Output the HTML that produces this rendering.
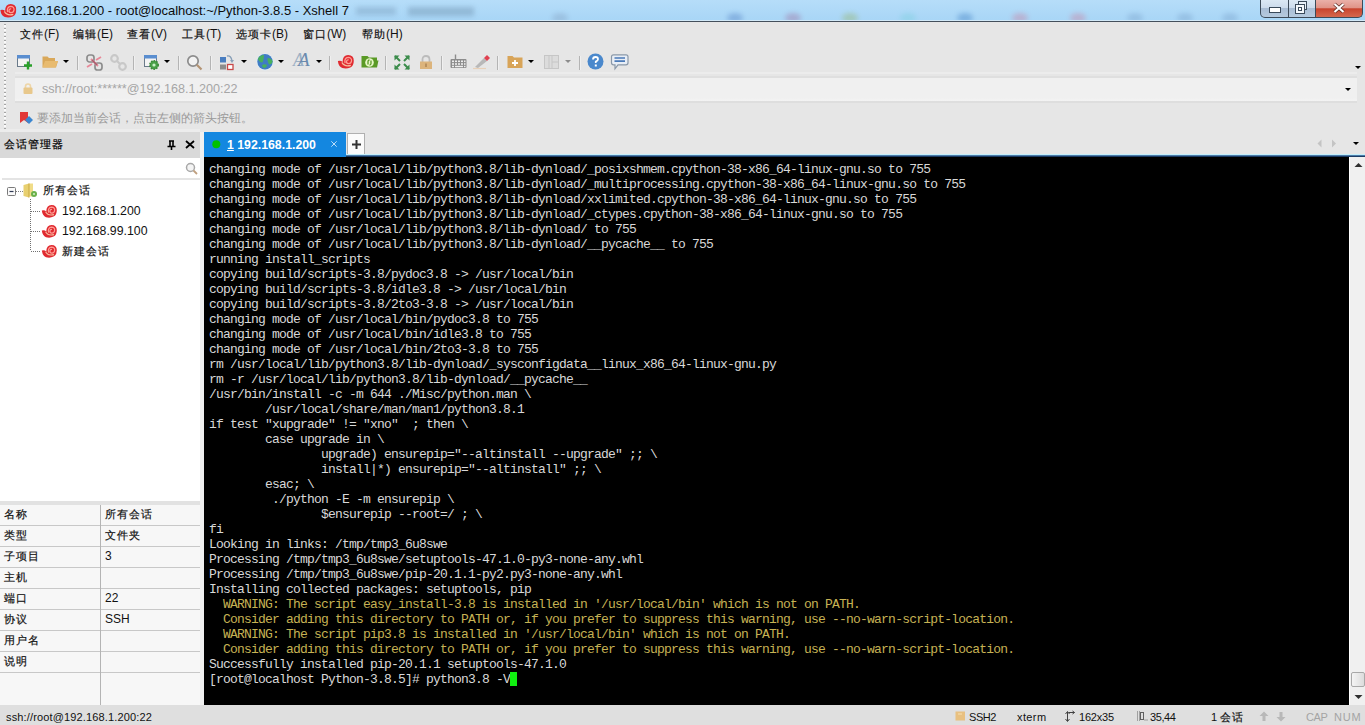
<!DOCTYPE html>
<html><head><meta charset="utf-8">
<style>
*{margin:0;padding:0;box-sizing:border-box}
html,body{width:1365px;height:725px;overflow:hidden;background:#e6e6e6;font-family:"Liberation Sans",sans-serif;font-size:12px;color:#000;position:relative}
.abs{position:absolute}
svg{position:absolute;overflow:visible}
#title{left:0;top:0;width:1365px;height:22px;background:linear-gradient(#b6ddf9,#a7d5f6);overflow:hidden}
#title .line{left:0;top:21px;width:1365px;height:1px;background:#44505c}
#title .line2{left:0;top:20px;width:1365px;height:1px;background:#d2e9f8}
#title .t{left:21px;top:3px;font-size:13px;color:#0c0c0c;white-space:nowrap}
.cap{top:0;height:18px;border:1px solid #3c4a58;border-top:none}
#menubar{left:0;top:22px;width:1365px;height:24px}
.mi{position:absolute;top:5px;font-size:12px;white-space:nowrap;color:#111}
.c{-webkit-text-stroke:0.2px currentColor;font-style:normal;font-size:11px;letter-spacing:1px}
#grip{left:4px;top:24px;width:2px;height:105px;background:repeating-linear-gradient(#a4a4a4 0 1.5px,#fafafa 1.5px 3px,#e6e6e6 3px 4px)}
.sep{position:absolute;top:56px;width:2px;height:14px;background:#b4b4b4;border-right:1px solid #f0f0f0}
.arr{position:absolute;width:0;height:0;border-left:3px solid transparent;border-right:3px solid transparent;border-top:3px solid #000}
#addr{left:15px;top:78px;width:1342px;height:23px;background:linear-gradient(#f0f0f0 0,#f0f0f0 85%,#f3f3f3 100%)}
#addr .t{left:27px;top:4px;color:#a6a6a6;font-size:12.6px;white-space:nowrap}
#hint .t{left:37px;top:110px;color:#9a9a9a;font-size:12px;white-space:nowrap}
#left{left:0;top:158px;width:200px;height:547px;background:#fff}
#lgap{left:200px;top:132px;width:4px;height:573px;background:#f0f0f0}
#lhead{left:0;top:132px;width:200px;height:26px;background:#d9d9d9}
#lhead .t{left:4px;top:5px;font-size:12px}
#search{left:2px;top:158px;width:198px;height:22px;background:#fff;border-bottom:2px solid #e4e4e4}
.tree{position:absolute;font-size:12.3px;white-space:nowrap;color:#111}
#split{left:0;top:501px;width:200px;height:4px;background:#e2e2e2}
#grid{left:0;top:505px;width:200px;height:200px;background:#f7f7f7}
.row{position:absolute;left:0;width:200px;height:21px;border-bottom:1px solid #c8c8c8}
.row span{position:absolute;top:2px;font-size:12px;white-space:nowrap;color:#111}
#vdiv{left:100px;top:505px;width:1px;height:200px;background:#b4b4b4}
#tabstrip{left:204px;top:132px;width:1161px;height:25px}
#tab{left:204px;top:132px;width:142px;height:25px;background:#1487e0}
#term{left:204px;top:157px;width:1145px;height:548px;background:#000;overflow:hidden}
#term pre{position:absolute;left:5px;top:5px;font-family:"Liberation Mono",monospace;font-size:13px;letter-spacing:-0.8px;line-height:15px;color:#d8d8d8}
#term .w{color:#c6b254}
.cur{display:inline-block;width:7px;height:14px;background:#10f010;vertical-align:-3px}
#sb{left:1349px;top:157px;width:16px;height:548px;background:#f0f0f0;border-left:1px solid #fff}
#status{left:0;top:705px;width:1365px;height:20px;background:#dfdfdf}
.st{position:absolute;top:711px;font-size:11px;white-space:nowrap;color:#111}
</style></head><body>
<svg width="0" height="0" style="position:absolute">
<defs>
<symbol id="xs" viewBox="0 0 16 14">
<path d="M0.8,6.6 Q3.5,5.8 5.3,7.5 Q5.2,1.2 10.5,0.9 Q15.8,1 15.8,6.2 Q15.8,11 12.5,12.6 Q9,14.3 5,13.2 Q1.5,12 0.8,6.6Z" fill="#e02a30"/>
<path d="M4.6,7.8 Q7,12.3 13,10.6" stroke="#f4c0a0" stroke-width="1.1" fill="none"/>
<path d="M7.6,8.6 Q6.5,3.6 10.6,3.2 Q13.8,3.3 13.7,6.3 Q13.4,9.2 10.7,9.1 Q8.7,8.9 8.9,6.8 Q9.2,5.2 11,5.5" stroke="#ff9c94" stroke-width="1.2" fill="none"/>
</symbol>
</defs>
</svg>

<div id="title" class="abs">
<div class="abs" style="left:552px;top:13px;width:16px;height:10px;border-radius:50%;background:#8aa8c8;opacity:0.45;filter:blur(2.5px)"></div><div class="abs" style="left:727px;top:13px;width:16px;height:10px;border-radius:50%;background:#5a88c8;opacity:0.45;filter:blur(2.5px)"></div><div class="abs" style="left:785px;top:13px;width:16px;height:10px;border-radius:50%;background:#a07aa8;opacity:0.45;filter:blur(2.5px)"></div><div class="abs" style="left:842px;top:13px;width:16px;height:10px;border-radius:50%;background:#98b878;opacity:0.45;filter:blur(2.5px)"></div><div class="abs" style="left:900px;top:13px;width:16px;height:10px;border-radius:50%;background:#80d0e0;opacity:0.45;filter:blur(2.5px)"></div><div class="abs" style="left:957px;top:13px;width:16px;height:10px;border-radius:50%;background:#4a88c8;opacity:0.45;filter:blur(2.5px)"></div><div class="abs" style="left:1012px;top:13px;width:16px;height:10px;border-radius:50%;background:#c888a8;opacity:0.45;filter:blur(2.5px)"></div><div class="abs" style="left:1070px;top:13px;width:16px;height:10px;border-radius:50%;background:#c888a8;opacity:0.45;filter:blur(2.5px)"></div><div class="abs" style="left:1127px;top:13px;width:16px;height:10px;border-radius:50%;background:#80a8d0;opacity:0.45;filter:blur(2.5px)"></div><div class="abs" style="left:1177px;top:13px;width:16px;height:10px;border-radius:50%;background:#80a8d0;opacity:0.45;filter:blur(2.5px)"></div><div class="abs" style="left:1222px;top:13px;width:16px;height:10px;border-radius:50%;background:#80a8d0;opacity:0.45;filter:blur(2.5px)"></div><div class="line2 abs"></div><div class="line abs"></div>
<svg style="left:0;top:3px" width="17" height="16"><use href="#xs" width="17" height="15" x="-0.5" y="0"/></svg>
<div class="t abs">192.168.1.200 - root@localhost:~/Python-3.8.5 - Xshell 7</div>
<div class="abs" style="left:356px;top:7px;width:40px;height:8px;background:rgba(70,100,130,0.22);filter:blur(2.5px)"></div><div class="abs" style="left:408px;top:7px;width:66px;height:9px;background:rgba(60,90,120,0.25);filter:blur(2.5px)"></div>
<div class="cap abs" style="left:1260px;width:29px;border-radius:0 0 0 5px;background:linear-gradient(#dbe8f4 0,#cddcec 45%,#a9bdd4 50%,#b6cade 100%)"></div>
<div class="cap abs" style="left:1288px;width:28px;background:linear-gradient(#dbe8f4 0,#cddcec 45%,#a9bdd4 50%,#b6cade 100%)"></div>
<div class="cap abs" style="left:1315px;width:48px;border-radius:0 0 5px 0;background:linear-gradient(#eab0a8 0,#e09488 45%,#c8442e 52%,#d4684e 100%)"></div>
<svg style="left:1269px;top:7px" width="12" height="6"><rect x="0.5" y="0.5" width="11" height="5" fill="#fff" stroke="#3a4a5a"/></svg>
<svg style="left:1294px;top:1px" width="14" height="14"><rect x="4.5" y="0.5" width="8" height="8" fill="#e8f0f8" stroke="#3a4a5a"/><rect x="1.5" y="3.5" width="9" height="9" fill="#f4f8fc" stroke="#3a4a5a"/><rect x="4" y="6" width="4" height="4" fill="#3a4a5a"/><rect x="5" y="7" width="2" height="2" fill="#fff"/></svg>
<svg style="left:1333px;top:3px" width="12" height="10"><path d="M1.5,1 L10.5,9 M10.5,1 L1.5,9" stroke="#5a2a22" stroke-width="3.6"/><path d="M1.5,1 L10.5,9 M10.5,1 L1.5,9" stroke="#fff" stroke-width="2.2"/></svg>
</div>

<div id="grip" class="abs"></div>
<div id="menubar" class="abs">
<span class="mi" style="left:20px"><i class="c">文件</i>(F)</span>
<span class="mi" style="left:73px"><i class="c">编辑</i>(E)</span>
<span class="mi" style="left:127px"><i class="c">查看</i>(V)</span>
<span class="mi" style="left:182px"><i class="c">工具</i>(T)</span>
<span class="mi" style="left:236px"><i class="c">选项卡</i>(B)</span>
<span class="mi" style="left:303px"><i class="c">窗口</i>(W)</span>
<span class="mi" style="left:362px"><i class="c">帮助</i>(H)</span>
</div>

<!-- toolbar -->
<div id="toolbar">
<svg style="left:16px;top:55px" width="16" height="16"><rect x="1.5" y="0.5" width="12" height="11" fill="#f4f4f4" stroke="#6a7a8a"/><rect x="1" y="0" width="13" height="3.5" fill="#5a8ed0"/><path d="M12,6.5 v8 M8,10.5 h8" stroke="#2aa02a" stroke-width="2.4"/></svg>
<svg style="left:42px;top:55px" width="17" height="13"><path d="M0.5,1.5 h5 l1.5,1.5 h6 v3 h3 l-2,6.5 h-13.5z" fill="#d9a85a"/><path d="M3,6 h13 l-2.5,6.5 h-13z" fill="#e8bb70"/></svg>
<div class="arr" style="left:63px;top:60px"></div>
<div class="sep" style="left:77px"></div>
<svg style="left:86px;top:54px" width="17" height="17"><rect x="1" y="1" width="7" height="7" rx="2.5" fill="none" stroke="#8c8c8c" stroke-width="1.7"/><rect x="9" y="9" width="7" height="7" rx="2.5" fill="none" stroke="#8c8c8c" stroke-width="1.7"/><path d="M1,13 L6,10 M10,6 L15,3 M5,5 L12,12" stroke="#e88898" stroke-width="1.8"/><path d="M6,6 L11,11" stroke="#a86070" stroke-width="1.6"/></svg>
<svg style="left:110px;top:54px" width="17" height="17"><circle cx="4.5" cy="4.5" r="3.3" fill="none" stroke="#c8c8c8" stroke-width="2.2"/><circle cx="12.5" cy="12.5" r="3.3" fill="none" stroke="#c8c8c8" stroke-width="2.2"/><path d="M7,7 L10,10" stroke="#c8c8c8" stroke-width="2.2"/></svg>
<div class="sep" style="left:133px"></div>
<svg style="left:143px;top:55px" width="17" height="17"><rect x="1.5" y="0.5" width="12" height="11" fill="#f4f4f4" stroke="#6a7a8a"/><rect x="1" y="0" width="13" height="3.5" fill="#5a8ed0"/><circle cx="11" cy="10" r="4.2" fill="#4aa04a" stroke="#3a8a3a" stroke-width="1.6" stroke-dasharray="1.6 1.1"/><circle cx="11" cy="10" r="1.6" fill="#c8f0c8"/></svg>
<div class="arr" style="left:164px;top:60px"></div>
<div class="sep" style="left:178px"></div>
<svg style="left:186px;top:54px" width="17" height="17"><circle cx="7" cy="7" r="5.2" fill="#f2f2f2" stroke="#8c8c8c" stroke-width="1.7"/><path d="M10.8,10.8 L15.5,15.5" stroke="#b49474" stroke-width="2.2"/></svg>
<div class="sep" style="left:210px"></div>
<svg style="left:219px;top:54px" width="16" height="17"><rect x="1" y="3" width="6" height="5.5" fill="#4a7ec0"/><rect x="1" y="10.5" width="6" height="5" fill="#8c8c8c"/><rect x="8.5" y="10.5" width="5.5" height="5" fill="#fff" stroke="#c84848" stroke-width="1.3"/><path d="M8,2 Q12,1 13,7" fill="none" stroke="#8aa0b8" stroke-width="1.4"/><path d="M11,6 L13,9 L15,6z" fill="#8aa0b8"/></svg>
<div class="arr" style="left:241px;top:60px"></div>
<svg style="left:257px;top:53px" width="17" height="17"><circle cx="8" cy="8.8" r="8.6" fill="#dff0fa" opacity="0.7"/><circle cx="8" cy="8.8" r="7.7" fill="#3f7cc4"/><path d="M1.5,4.5 Q4,1.5 7,2 Q7,6 5.5,9.5 Q2,9 1,6.5z M10.5,5 Q14.5,5 15.6,8.5 Q15,11.5 12,11.5 Q10,8.5 10.5,5z M5,12 Q8,10.5 10,12 Q9.5,15 6.5,15 Q5,13.5 5,12z" fill="#48b05e"/></svg>
<div class="arr" style="left:278px;top:60px"></div>
<span class="abs" style="left:293px;top:50px;font-family:'Liberation Serif',serif;font-style:italic;font-size:18px;color:#9cb0c4;line-height:20px">A</span><span class="abs" style="left:298px;top:50px;font-family:'Liberation Serif',serif;font-style:italic;font-size:19px;color:#6a8aae;line-height:20px">A</span>
<div class="arr" style="left:316px;top:60px"></div>
<div class="sep" style="left:329px"></div>
<svg style="left:337px;top:54px" width="17" height="15"><use href="#xs" width="17" height="15"/></svg>
<svg style="left:361px;top:55px" width="18" height="14"><path d="M0.5,1 h6 l1.5,1.5 h8 v3 h1.5 l-1.5,7 h-15.5z" fill="#5a9a26"/><circle cx="8.5" cy="7.5" r="4.3" fill="#e8f8c8"/><path d="M7,9.5 v-3 q0,-1.5 1.5,-1.5 M10,5.5 v3 q0,1.5 -1.5,1.5" stroke="#5a9a26" stroke-width="1.3" fill="none"/></svg>
<div class="sep" style="left:385px"></div>
<svg style="left:394px;top:55px" width="16" height="15"><path d="M1,1 L6,6 M15,1 L10,6 M1,14 L6,9 M15,14 L10,9" stroke="#3c8c4c" stroke-width="2"/><path d="M0.5,0.5 h5 l-5,5z M15.5,0.5 h-5 l5,5z M0.5,14.5 h5 l-5,-5z M15.5,14.5 h-5 l5,-5z" fill="#3c8c4c"/></svg>
<svg style="left:419px;top:55px" width="14" height="15"><path d="M3.5,7 V4.5 Q3.5,1 7,1 Q10.5,1 10.5,4.5 V7" fill="none" stroke="#bcbcbc" stroke-width="1.8"/><rect x="1" y="6.5" width="12" height="7.5" fill="#dcb47c"/><rect x="6.2" y="8.5" width="1.6" height="3.5" fill="#b08858"/></svg>
<div class="sep" style="left:441px"></div>
<svg style="left:450px;top:54px" width="17" height="15"><path d="M5.5,0.5 v5" stroke="#8c8c8c" stroke-width="1.4"/><rect x="0.5" y="5" width="16" height="9" rx="1" fill="#8c8c8c"/><g fill="#eeeeee"><rect x="2" y="6.5" width="2" height="1.6"/><rect x="5" y="6.5" width="2" height="1.6"/><rect x="8" y="6.5" width="2" height="1.6"/><rect x="11" y="6.5" width="2" height="1.6"/><rect x="2" y="9.2" width="2" height="1.6"/><rect x="5" y="9.2" width="2" height="1.6"/><rect x="8" y="9.2" width="2" height="1.6"/><rect x="11" y="9.2" width="2" height="1.6"/><rect x="14" y="9.2" width="1.5" height="1.6"/><rect x="2" y="11.8" width="2" height="1.4"/><rect x="5" y="11.8" width="8" height="1.4"/><rect x="14" y="11.8" width="1.5" height="1.4"/><rect x="14" y="6.5" width="1.5" height="1.6"/></g></svg>
<svg style="left:471px;top:54px" width="20" height="16"><path d="M2,14.5 h13" stroke="#e8d0b8" stroke-width="1.2"/><path d="M4,13 L13,4 L16,7 L7,14z" fill="#b8b8b8"/><path d="M13,4 L16,1 L19,4 L16,7z" fill="#e04050"/></svg>
<div class="sep" style="left:497px"></div>
<svg style="left:507px;top:55px" width="16" height="14"><path d="M0.5,1 h5 l1.5,1.5 h8.5 v10.5 h-15z" fill="#d8a458"/><path d="M8,5 v6 M5,8 h6" stroke="#fff" stroke-width="1.8"/></svg>
<div class="arr" style="left:528px;top:60px"></div>
<svg style="left:544px;top:55px" width="16" height="14"><rect x="0.5" y="0.5" width="14" height="13" fill="#dcdcdc" stroke="#c6c6c6"/><path d="M5,1 v12 M8,1 v12 M8,7 h6" stroke="#c6c6c6"/></svg>
<div class="arr" style="left:565px;top:60px;border-top-color:#8c8c8c"></div>
<div class="sep" style="left:579px"></div>
<svg style="left:587px;top:53px" width="17" height="17"><circle cx="8.5" cy="8.5" r="8" fill="#4a88cc"/><path d="M6,6.5 Q6,4 8.5,4 Q11,4 11,6.3 Q11,7.8 8.8,8.7 V10" fill="none" stroke="#fff" stroke-width="1.8"/><rect x="7.8" y="11.5" width="2" height="2" fill="#fff"/></svg>
<svg style="left:611px;top:54px" width="18" height="16"><path d="M2.5,0.8 h12.5 q2,0 2,2 v6 q0,2 -2,2 h-8 l-3,4 v-4 h-1.5 q-2,0 -2,-2 v-6 q0,-2 2,-2z" fill="#e8eef6" stroke="#8a98a8" stroke-width="1.2"/><path d="M3.5,4 h10.5 M3.5,7.2 h10.5" stroke="#4a7ab8" stroke-width="1.7"/></svg>
<div class="arr" style="left:1355px;top:66px"></div>
</div>

<div class="abs" style="left:15px;top:72px;width:1342px;height:2px;background:#ececec"></div><div class="abs" style="left:15px;top:76px;width:1342px;height:2px;background:#dfdfdf"></div><div class="abs" style="left:15px;top:101px;width:1342px;height:2px;background:#dedede"></div><div id="addr" class="abs"><div class="t abs">ssh://root:******@192.168.1.200:22</div></div>
<svg style="left:23px;top:83px" width="11" height="12"><path d="M2.5,5 V3.5 Q2.5,1 5,1 Q7.5,1 7.5,3.5 V5" fill="none" stroke="#eed6a8" stroke-width="1.6"/><rect x="0.5" y="4.5" width="9" height="6.5" rx="1" fill="#e8c88c"/></svg>
<div class="arr" style="left:1345px;top:88px"></div>
<div id="hint"><div class="t abs">要添加当前会话，点击左侧的箭头按钮。</div></div>
<svg style="left:19px;top:111px" width="15" height="14"><path d="M1,1 h8 v11 l-4,-3 l-4,3z" fill="#e23838"/><path d="M6,9 L10,5 L14,9 L10,13z" fill="#3a86d0"/></svg>

<!-- left panel -->
<div class="abs" style="left:0;top:129px;width:200px;height:3px;background:#ececec"></div><div id="lgap" class="abs"></div>
<div id="lhead" class="abs"><div class="t abs"><i class="c">会话管理器</i></div></div>
<svg style="left:167px;top:140px" width="9" height="10"><path d="M2,1 h5 M3,1.5 v5 h3 v-5 M0.5,6.5 h8 M4.5,6.5 v3.5" fill="none" stroke="#000" stroke-width="1.6"/></svg>
<svg style="left:185px;top:140px" width="10" height="9"><path d="M1,1 L9,8 M9,1 L1,8" stroke="#000" stroke-width="1.8"/></svg>
<div id="left" class="abs"></div>
<div id="search" class="abs"></div>
<svg style="left:185px;top:162px" width="13" height="13"><circle cx="5.5" cy="5.5" r="4" fill="#f4f4f4" stroke="#a8a8a8" stroke-width="1.5"/><path d="M8.5,8.5 L12,12" stroke="#c0a080" stroke-width="1.8"/></svg>

<svg style="left:7px;top:187px" width="10" height="10"><rect x="0.5" y="0.5" width="8" height="8" rx="1" fill="#fafafa" stroke="#7a7a7a"/><path d="M2.5,4.5 h4" stroke="#303a54" stroke-width="1.2"/></svg>
<svg style="left:16px;top:191px" width="8" height="2"><path d="M0,0.5 h7" stroke="#808080" stroke-dasharray="1 1"/></svg>
<svg style="left:23px;top:183px" width="15" height="15"><path d="M0.5,2 L6,0.5 V14.5 L0.5,13z" fill="#e8d070"/><path d="M6,0.5 h4 v13 h-4z" fill="#f0dc88"/><path d="M6,0.5 V14.5" stroke="#c8a840"/><circle cx="11" cy="11" r="3" fill="#6ab04a"/><circle cx="11" cy="11" r="1" fill="#d8f0c8"/></svg>
<span class="tree" style="left:43px;top:183px"><i class="c">所有会话</i></span>
<svg style="left:30px;top:199px" width="12" height="54"><path d="M0.5,0 V52" stroke="#707070" stroke-dasharray="1 1"/><path d="M1,12.5 h10 M1,32.5 h10 M1,52.5 h10" stroke="#707070" stroke-dasharray="1 1"/></svg>
<svg style="left:41px;top:204px" width="16" height="14"><use href="#xs" width="16" height="14"/></svg>
<span class="tree" style="left:62px;top:204px">192.168.1.200</span>
<svg style="left:41px;top:224px" width="16" height="14"><use href="#xs" width="16" height="14"/></svg>
<span class="tree" style="left:62px;top:224px">192.168.99.100</span>
<svg style="left:41px;top:244px" width="16" height="14"><use href="#xs" width="16" height="14"/></svg>
<span class="tree" style="left:62px;top:244px"><i class="c">新建会话</i></span>

<div id="split" class="abs"></div>
<div id="grid" class="abs">
<div class="row" style="top:0"><span style="left:4px"><i class="c">名称</i></span><span style="left:105px"><i class="c">所有会话</i></span></div>
<div class="row" style="top:21px"><span style="left:4px"><i class="c">类型</i></span><span style="left:105px"><i class="c">文件夹</i></span></div>
<div class="row" style="top:42px"><span style="left:4px"><i class="c">子项目</i></span><span style="left:105px">3</span></div>
<div class="row" style="top:63px"><span style="left:4px"><i class="c">主机</i></span></div>
<div class="row" style="top:84px"><span style="left:4px"><i class="c">端口</i></span><span style="left:105px">22</span></div>
<div class="row" style="top:105px"><span style="left:4px"><i class="c">协议</i></span><span style="left:105px">SSH</span></div>
<div class="row" style="top:126px"><span style="left:4px"><i class="c">用户名</i></span></div>
<div class="row" style="top:147px"><span style="left:4px"><i class="c">说明</i></span></div>
</div>
<div id="vdiv" class="abs"></div>

<!-- tabs -->
<div class="abs" style="left:204px;top:154px;width:1161px;height:1px;background:#c4eefa"></div>
<div class="abs" style="left:204px;top:155px;width:1161px;height:1px;background:#4a7aa8"></div><div class="abs" style="left:204px;top:156px;width:1161px;height:1px;background:#1c3c64"></div>
<div id="tab" class="abs"></div>
<svg style="left:212px;top:140px" width="9" height="9"><circle cx="4.3" cy="4.3" r="4" fill="#00c000"/></svg>
<span class="abs" style="left:227px;top:138px;font-size:12.3px;font-weight:bold;color:#fff;white-space:nowrap"><u>1</u> 192.168.1.200</span>
<svg style="left:331px;top:141px" width="6" height="6"><path d="M0.3,0.3 L5.7,5.7 M5.7,0.3 L0.3,5.7" stroke="#cfe8fb" stroke-width="0.9"/></svg>
<div class="abs" style="left:347px;top:133px;width:18px;height:21px;background:#fbfbfb;border:1px solid #b0b0b0;border-bottom:none"></div>
<svg style="left:352px;top:140px" width="9" height="9"><path d="M4.5,0 V9 M0,4.5 H9" stroke="#333" stroke-width="2"/></svg>
<svg style="left:1316px;top:139px" width="24" height="10"><path d="M5.5,0.5 L1.5,4.5 L5.5,8.5z M16,0.5 L20,4.5 L16,8.5z" fill="#c4c4c4"/></svg>
<div class="arr" style="left:1353px;top:142px"></div>

<div id="term" class="abs"><pre>changing mode of /usr/local/lib/python3.8/lib-dynload/_posixshmem.cpython-38-x86_64-linux-gnu.so to 755
changing mode of /usr/local/lib/python3.8/lib-dynload/_multiprocessing.cpython-38-x86_64-linux-gnu.so to 755
changing mode of /usr/local/lib/python3.8/lib-dynload/xxlimited.cpython-38-x86_64-linux-gnu.so to 755
changing mode of /usr/local/lib/python3.8/lib-dynload/_ctypes.cpython-38-x86_64-linux-gnu.so to 755
changing mode of /usr/local/lib/python3.8/lib-dynload/ to 755
changing mode of /usr/local/lib/python3.8/lib-dynload/__pycache__ to 755
running install_scripts
copying build/scripts-3.8/pydoc3.8 -&gt; /usr/local/bin
copying build/scripts-3.8/idle3.8 -&gt; /usr/local/bin
copying build/scripts-3.8/2to3-3.8 -&gt; /usr/local/bin
changing mode of /usr/local/bin/pydoc3.8 to 755
changing mode of /usr/local/bin/idle3.8 to 755
changing mode of /usr/local/bin/2to3-3.8 to 755
rm /usr/local/lib/python3.8/lib-dynload/_sysconfigdata__linux_x86_64-linux-gnu.py
rm -r /usr/local/lib/python3.8/lib-dynload/__pycache__
/usr/bin/install -c -m 644 ./Misc/python.man \
        /usr/local/share/man/man1/python3.8.1
if test "xupgrade" != "xno"  ; then \
        case upgrade in \
                upgrade) ensurepip="--altinstall --upgrade" ;; \
                install|*) ensurepip="--altinstall" ;; \
        esac; \
         ./python -E -m ensurepip \
                $ensurepip --root=/ ; \
fi
Looking in links: /tmp/tmp3_6u8swe
Processing /tmp/tmp3_6u8swe/setuptools-47.1.0-py3-none-any.whl
Processing /tmp/tmp3_6u8swe/pip-20.1.1-py2.py3-none-any.whl
Installing collected packages: setuptools, pip
<span class="w">  WARNING: The script easy_install-3.8 is installed in '/usr/local/bin' which is not on PATH.
  Consider adding this directory to PATH or, if you prefer to suppress this warning, use --no-warn-script-location.
  WARNING: The script pip3.8 is installed in '/usr/local/bin' which is not on PATH.
  Consider adding this directory to PATH or, if you prefer to suppress this warning, use --no-warn-script-location.</span>
Successfully installed pip-20.1.1 setuptools-47.1.0
[root@localhost Python-3.8.5]# python3.8 -V<span class="cur"></span></pre></div>
<div id="sb" class="abs"></div>
<svg style="left:1354px;top:162px" width="9" height="6"><path d="M0.5,5 L4.5,1 L8.5,5z" fill="#303030"/></svg>
<div class="abs" style="left:1351px;top:672px;width:14px;height:15px;border:1px solid #a8a8a8;border-radius:2px;background:linear-gradient(90deg,#f4f4f4,#dcdcdc)"></div>
<svg style="left:1354px;top:694px" width="9" height="6"><path d="M0.5,1 L4.5,5 L8.5,1z" fill="#303030"/></svg>

<div id="status" class="abs"></div>
<span class="st" style="left:6px;letter-spacing:0.15px">ssh://root@192.168.1.200:22</span>
<svg style="left:955px;top:711px" width="11" height="10"><rect x="0.5" y="0.5" width="9.5" height="9" fill="#e8c080"/><path d="M3,3 h4" stroke="#f8e0b0"/></svg>
<span class="st" style="left:969px;letter-spacing:-0.45px">SSH2</span>
<span class="st" style="left:1017px;letter-spacing:0.4px">xterm</span>
<svg style="left:1065px;top:711px" width="10" height="11"><path d="M2.5,1 V10 M2.5,0.5 L0.5,3 M2.5,0.5 L4.5,3 M2.5,10.5 L0.5,8 M2.5,10.5 L4.5,8 M4,1.5 H9.5 M9.5,1.5 L7.5,0 M9.5,1.5 L7.5,3" fill="none" stroke="#404040" stroke-width="1"/></svg>
<span class="st" style="left:1079px;letter-spacing:-0.2px">162x35</span>
<svg style="left:1137px;top:711px" width="11" height="10"><path d="M0.5,0.5 V9.5 M2.5,0.5 V9.5" stroke="#606060" stroke-dasharray="1 1"/><rect x="3.5" y="1.5" width="3" height="7" fill="none" stroke="#606060"/><path d="M7.5,9 h3" stroke="#606060" stroke-dasharray="1 1"/></svg>
<span class="st" style="left:1150px;letter-spacing:-0.4px">35,44</span>
<span class="st" style="left:1211px;top:710px">1 <i class="c">会话</i></span>
<svg style="left:1259px;top:711px" width="30" height="11"><path d="M5,0.5 L9.5,5 H6.5 V10 H3.5 V5 H0.5z M22,10.5 L26.5,6 H23.5 V1 H20.5 V6 H17.5z" fill="#b8b8b8"/></svg>
<span class="st" style="left:1306px;color:#a4a4a4;letter-spacing:-0.4px">CAP</span>
<span class="st" style="left:1334px;color:#a4a4a4;letter-spacing:0.8px">NUM</span>
</body></html>
